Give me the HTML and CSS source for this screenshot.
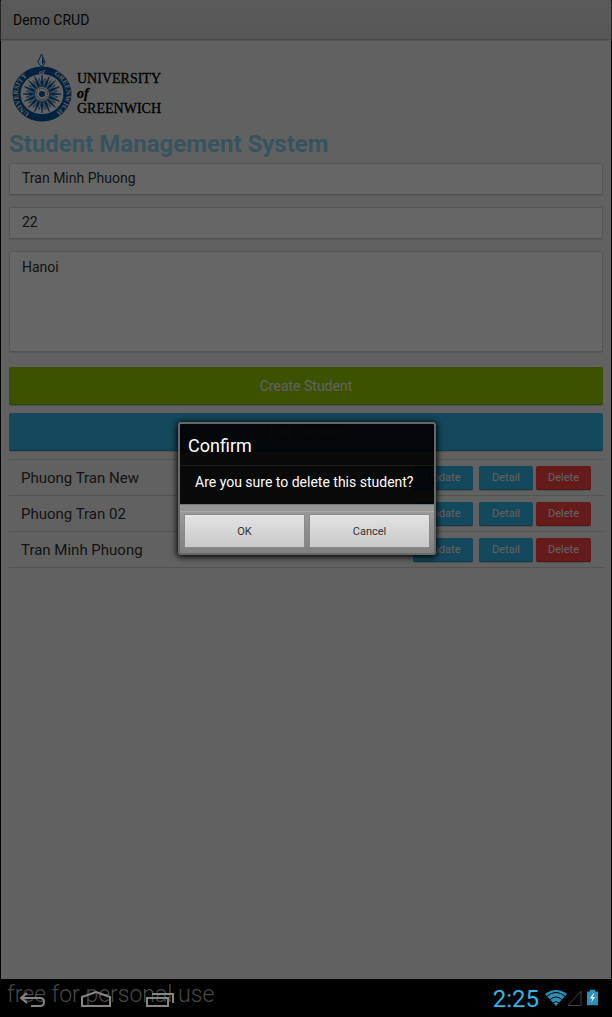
FILE: index.html
```html
<!DOCTYPE html>
<html lang="en">
<head>
<meta charset="utf-8">
<title>Demo CRUD</title>
<link rel="stylesheet" href="styles.css">
<script src="rays.js" defer></script>
</head>
<body>
<div class="screen">
  <div class="app">
    <header class="topbar">Demo CRUD</header>
    <main class="content">
      <div class="brand">
        <svg class="seal" viewBox="0 0 60 68" width="60" height="68" aria-hidden="true">
          <defs><path id="ring" d="M30 62.500 A24 22.500 0 0 1 30 17.500 A24 22.500 0 0 1 30 62.500"/></defs>
          <path d="M29.500 0 L33 8 Q32 11 30 13 Q27 11 26 8 Z" fill="none" stroke="#00569c"/>
          <path d="M30 2 L32 8 L30 11 Z" fill="#00569c"/>
          <ellipse cx="30" cy="40" rx="29.500" ry="27.500" fill="#00569c"/>
          <ellipse cx="30" cy="40" rx="21.500" ry="20" fill="#f3f3f3"/>
          <g id="rays"></g>
          <circle cx="30" cy="40" r="7" fill="#f3f3f3"/>
          <circle cx="30" cy="40" r="5.500" fill="none" stroke="#00569c" stroke-dasharray="1 1"/>
          <circle cx="30" cy="40" r="3" fill="#00569c"/>
          <text class="ring-text"><textPath href="#ring" startOffset="13">UNIVERSITY</textPath></text>
          <text class="ring-text of" x="30" y="20" text-anchor="middle">of</text>
          <text class="ring-text"><textPath href="#ring" startOffset="85">GREENWICH</textPath></text>
        </svg>
        <div class="brand-name"><span>UNIVERSITY</span><em>of</em><span>GREENWICH</span></div>
      </div>
      <h1 class="title">Student Management System</h1>
      <form class="form">
        <input class="field" type="text" aria-label="Name" value="Tran Minh Phuong">
        <input class="field" type="text" aria-label="Age" value="22">
        <textarea class="field area" aria-label="Address">Hanoi</textarea>
        <div class="actions">
          <button class="btn wide green" type="button">Create Student</button>
          <button class="btn wide blue" type="button">List Student</button>
        </div>
      </form>
      <ul class="list">
        <li class="row"><span class="name">Phuong Tran New</span><button class="btn small update blue">Update</button><button class="btn small detail blue">Detail</button><button class="btn small delete red">Delete</button></li>
        <li class="row"><span class="name">Phuong Tran 02</span><button class="btn small update blue">Update</button><button class="btn small detail blue">Detail</button><button class="btn small delete red">Delete</button></li>
        <li class="row"><span class="name">Tran Minh Phuong</span><button class="btn small update blue">Update</button><button class="btn small detail blue">Detail</button><button class="btn small delete red">Delete</button></li>
      </ul>
    </main>
    <div class="overlay">
      <section class="dialog" role="dialog" aria-labelledby="dialog-title">
        <h2 class="dialog-title" id="dialog-title">Confirm</h2>
        <p class="dialog-text">Are you sure to delete this student?</p>
        <div class="dialog-buttons">
          <button class="dialog-btn" type="button">OK</button>
          <button class="dialog-btn" type="button">Cancel</button>
        </div>
      </section>
    </div>
  </div>
  <footer class="sysbar">
    <span class="watermark">free for personal use</span>
    <nav class="nav">
      <button class="nav-btn" aria-label="Back"><svg width="28" height="18" viewBox="0 0 28 18"><path d="M9 2 L3 7 L9 12 M3 7 H22 Q26 7 26 11 Q26 15 22 15 H13"/></svg></button>
      <button class="nav-btn" aria-label="Home"><svg width="30" height="18" viewBox="0 0 30 18"><path d="M1 15 V6 L15 1 L29 6 V15 Z"/></svg></button>
      <button class="nav-btn" aria-label="Recent apps"><svg width="28" height="18" viewBox="0 0 28 18"><path d="M1 7 H22 V15 H1 Z M6 3 H27 V12"/></svg></button>
    </nav>
    <div class="status">
      <time class="clock">2:25</time>
      <svg width="22" height="18" viewBox="0 0 22 18" aria-label="Wi-Fi"><path d="M11 17 L0 5 Q11 -3 22 5 Z" fill="#2b91b8"/><path d="M2 7 Q11 0 20 7 M5 10.500 Q11 5.500 17 10.500 M8 14 Q11 11 14 14" fill="none" stroke="#000"/></svg>
      <svg width="15" height="18" viewBox="0 0 15 18" aria-label="No signal"><path d="M1 16.500 L14 2 V16.500 Z" fill="none" stroke="#454545"/></svg>
      <svg class="battery" width="11" height="18" viewBox="0 0 12 18" aria-label="Charging"><path d="M3 0 H9 V2 H12 V17 H0 V2 H3 Z" fill="#2b91b8"/><path d="M7 4 L3 9.500 H6 L4.500 14 L9 8 H6 L8 4 Z" fill="#e8f4f8"/></svg>
    </div>
  </footer>
</div>
</body>
</html>
```

FILE: styles.css
```css
* { box-sizing: border-box; }
body { margin: 0; background: #000; font-family: Roboto, "Liberation Sans", sans-serif; }
button, input, textarea { font-family: inherit; }
h1, h2, p, ul { margin: 0; padding: 0; }

.screen { min-height: 100vh; display: flex; flex-direction: column; }
.app { flex: 1; margin: 0 1px; position: relative; background: #f3f3f3; }
.topbar {
  height: 40px; padding: 0 12px; line-height: 40px; font-size: 14px; color: #111;
  background: linear-gradient(#e0e0e0, #dadada); border-bottom: 1px solid #b4b4b4;
  box-shadow: 0 1px 1px #d8d8d8;
}
.content { padding: 14px 8px 0; }

.brand { display: flex; align-items: flex-end; gap: 5px; padding-left: 3px; }
.seal { display: block; overflow: visible; }
.ring-text { font: 700 7px "Liberation Serif", serif; fill: #f3f3f3; }
.ring-text.of { font-style: italic; }
.brand-name {
  display: flex; flex-direction: column; padding-bottom: 6px;
  font: 14px/14px "Liberation Serif", serif; color: #000; -webkit-text-stroke: 0.3px #000;
}
.brand-name em { font-weight: 700; line-height: 16px; }

.title { margin-top: 8px; font-size: 24px; line-height: 28px; font-weight: 700; color: #8bd3eb; }

.form { display: flex; flex-direction: column; gap: 12px; margin-top: 5px; }
.field {
  display: block; width: 100%; height: 32px; padding: 0 12px 2px; border: 1px solid #d8d8d8;
  border-bottom-color: #cacaca; border-radius: 2px; background: #fff; color: #333;
  font-size: 14px; outline: none; box-shadow: 0 1px 1px #dcdcdc;
}
.area { height: 101px; padding: 6px 12px; line-height: 18px; resize: none; }
.actions { display: flex; flex-direction: column; gap: 8px; margin-top: 3px; }

.btn { border: 0; border-radius: 2px; padding: 0; color: #f3f3f3; box-shadow: inset 0 -1px rgba(0,0,0,.2), 0 1px 1px #ccc; }
.wide { height: 38px; font-size: 14px; }
.green { background: #99cc00; }
.blue { background: #33b5e5; }
.red { background: #ff4444; }

.list { list-style: none; margin-top: 8px; border-top: 1px solid #d0d0d0; }
.row { display: flex; align-items: center; height: 36px; padding: 0 12px; border-bottom: 1px solid #d0d0d0; font-size: 15px; color: #333; }
.name { flex: 1; }
.small { height: 24px; font-size: 11px; }
.update { width: 60px; }
.detail { width: 54px; margin: 0 3px 0 6px; }
.delete { width: 55px; }

.overlay { position: absolute; inset: 0; display: grid; place-items: center; padding: 0 0 2px 2px; background: rgba(0,0,0,.6); }
.dialog {
  width: 258px; border: 2px solid #686868; border-radius: 3px; overflow: hidden;
  background: rgba(0,0,0,.9); color: #fff; box-shadow: 0 1px 6px 1px #000;
}
.dialog-title { height: 42px; padding: 2px 8px 0; border-bottom: 1px solid #1c1c1c; font-size: 18px; line-height: 40px; font-weight: 400; }
.dialog-text { height: 38px; padding: 0 15px; font-size: 14px; line-height: 32px; white-space: nowrap; }
.dialog-buttons {
  display: grid; grid-template-columns: 1fr 1fr; gap: 4px; padding: 9px 4px 5px;
  border-top: 1px solid #777; background: linear-gradient(#959595 6px, #b8b8b8 6px, #999 7px, #808080);
}
.dialog-btn {
  height: 34px; border: 1px solid #898989; border-radius: 1px; padding: 0;
  background: linear-gradient(#e3e3e3, #c9c9c9); color: #333; font-size: 11px;
}

.sysbar { position: relative; height: 38px; display: flex; justify-content: space-between; align-items: center; padding: 0 14px 0 18px; }
.watermark { position: absolute; left: 7px; top: 2px; font-size: 23px; line-height: 28px; font-weight: 300; color: #484848; }
.nav { position: relative; display: flex; gap: 35px; padding-top: 3px; }
.nav-btn { display: block; border: 0; padding: 0; background: none; }
.nav-btn svg { display: block; fill: none; stroke: #858585; stroke-width: 2; }
.status { display: flex; align-items: center; }
.clock { font-size: 24px; line-height: 36px; color: #33b5e5; padding: 2px 6px 0 0; }
.battery { margin-left: 5px; }
```

FILE: rays.js
```js
const rays = document.getElementById("rays");
const ns = "http://www.w3.org/2000/svg";
for (let i = 0; i < 32; i++) {
  const ray = document.createElementNS(ns, "path");
  const tip = i % 2 ? 24 : 21;
  ray.setAttribute("d", `M30 ${tip} L31 29 L30 34 L29 29 Z`);
  ray.setAttribute("fill", i % 2 ? "none" : "#00569c");
  ray.setAttribute("stroke", "#00569c");
  ray.setAttribute("stroke-width", "0.6");
  ray.setAttribute("transform", `rotate(${i * 11.25} 30 40)`);
  rays.appendChild(ray);
}
```
